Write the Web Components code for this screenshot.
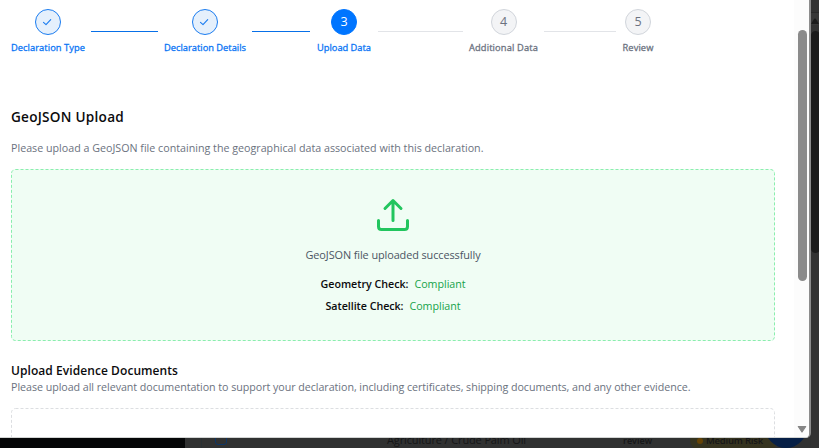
<!DOCTYPE html>
<html lang="en">
<head>
<meta charset="utf-8">
<title>Declaration</title>
<style>
html,body{margin:0;height:100%;overflow:hidden;background:#303131}
body{font-family:"Open Sans","Noto Sans",sans-serif;color:#0b0b0d}
</style>
</head>
<body>
<declaration-page></declaration-page>
<script>
const define=(name,html,setup)=>customElements.define(name,class extends HTMLElement{
  connectedCallback(){
    if(this.shadowRoot)return;
    const t=document.createElement('template');
    t.innerHTML=html;
    this.attachShadow({mode:'open'}).append(t.content.cloneNode(true));
    if(setup)setup(this,this.shadowRoot);
  }
});

/* One line of text whose tracking is tuned so that it spans the given width. */
define('fit-text',`<style>:host{display:block;white-space:nowrap}span{display:inline-block;white-space:nowrap}</style><span></span>`,(el,root)=>{
  const s=root.querySelector('span');
  s.textContent=el.getAttribute('text');
  const w=+el.getAttribute('w');
  el.style.width=w+'px';
  s.style.letterSpacing=(w-s.getBoundingClientRect().width)/s.textContent.length+'px';
});

define('step-item',`<style>
:host{display:flex;flex-direction:column;align-items:center;color:#6b7280}
.c{box-sizing:border-box;width:26px;height:26px;border-radius:50%;border:1px solid #d1d5db;background:#f3f4f6;display:flex;align-items:center;justify-content:center;font-size:12.5px;line-height:24px}
:host([state=done]),:host([state=active]){color:#0a75f5}
:host([state=done]) .c{border-color:#1a7cf0;background:#e5f0fc}
:host([state=active]) .c{border-color:#0075ff;background:#0075ff;color:#fff}
fit-text{margin-top:6px;font-size:9.3px;line-height:13px;-webkit-text-stroke:.3px currentColor}
svg{display:block}
</style><div class="c"></div><fit-text></fit-text>`,(el,root)=>{
  const c=root.querySelector('.c');
  if(el.getAttribute('state')==='done')c.innerHTML='<svg width="12" height="12" viewBox="0 0 12 12" fill="none" stroke="#1a7cf0" stroke-width="1.1" stroke-linecap="round" stroke-linejoin="round"><path d="M1.5 6.4 4 8.7 8.7 3.6"/></svg>';
  else c.textContent=el.getAttribute('n');
  const old=root.querySelector('fit-text'),f=document.createElement('fit-text');
  f.setAttribute('text',el.getAttribute('label'));f.setAttribute('w',el.getAttribute('w'));
  old.replaceWith(f);
});

define('step-line',`<style>:host{display:block;height:1px;margin:22px 6px 0;background:#e2e4e8}:host([on]){background:#0870e8}</style>`);

define('upload-zone',`<style>
:host{display:flex;box-sizing:border-box;flex-direction:column;align-items:center;position:relative}
svg.b{position:absolute;inset:0;width:100%;height:100%}
</style><svg class="b"><rect x=".5" y=".5" rx="4" fill="none" stroke-dasharray="3 2"/></svg><slot></slot>`,(el,root)=>{
  const r=root.querySelector('rect');
  r.style.width='calc(100% - 1px)';r.style.height='calc(100% - 1px)';
  r.setAttribute('stroke',el.getAttribute('line'));
});

define('scroll-bar',`<style>
:host{display:flex;flex-direction:column;align-items:center;width:15px;box-sizing:border-box;background:#fcfcfc;padding:30px 0 3px 1px}
i{width:9px;height:251px;border-radius:5px;background:#8b8b8b}
svg{display:block;margin-top:auto}
</style><i></i><svg width="10" height="9"><path d="M1.3 1.5H8.7L5 7Z" fill="#858585" stroke="#858585" stroke-width="1.2" stroke-linejoin="round"/></svg>`);

define('page-backdrop',`<style>
:host{position:absolute;left:0;right:0;bottom:0;height:448px;overflow:hidden;background:#303131}
.nav{position:absolute;left:0;bottom:0;width:185px;height:12px;background:#050607}
.rule{position:absolute;left:201px;bottom:0;width:1px;height:12px;background:#293033}
.box{position:absolute;box-sizing:border-box;left:215px;top:433px;width:12px;height:12px;border:1px solid #0c3566;border-radius:3px}
.t{position:absolute;color:#151617}
.p{position:absolute;left:690px;top:430px;width:88px;height:20px;border-radius:10px;background:#35331f}
.dot{position:absolute;left:697px;top:438px;width:6px;height:6px;border-radius:50%;background:#654305}
.fab{position:absolute;left:765px;top:406px;width:42px;height:42px;border-radius:50%;background:#061f46}
.bar{position:absolute;left:811px;top:0;width:8px;height:448px;background:#323232}
.up{position:absolute;left:0;top:12px;width:8px;height:13px;background:#373737;border-top:1px solid #292929;box-sizing:border-box}
.thumb{position:absolute;left:0;top:31px;width:9px;height:222px;border-radius:5px;background:#1b1b1b}
svg{position:absolute;left:0;top:18px}
</style>
<div class="nav"></div><div class="rule"></div><div class="box"></div>
<div class="t" style="left:250px;top:444px;font-size:11px;line-height:15px"><fit-text text="Pending" w="35"></fit-text></div>
<div class="t" style="left:387px;top:432px;font-size:11px;line-height:15px"><fit-text text="Agriculture / Crude Palm Oil" w="139"></fit-text></div>
<div class="t" style="left:623px;top:434px;font-size:9px;line-height:13px;font-weight:600"><fit-text text="review" w="29"></fit-text></div>
<div class="p"></div><div class="dot"></div>
<div class="t" style="left:706px;top:434px;font-size:9.5px;line-height:13px;font-weight:600"><fit-text text="Medium Risk" w="57"></fit-text></div>
<div class="fab"></div>
<div class="bar"><div class="up"></div><svg width="8" height="7"><path d="M0 6 3.2.8Q4 .2 4.8 .8L8 6Z" fill="#1b1b1b"/></svg><div class="thumb"></div></div>`);

define('declaration-page',`<style>
:host{display:block;position:relative;width:819px;height:448px;overflow:hidden}
.dialog{position:relative;box-sizing:border-box;width:811px;height:438px;background:#fff;border-right:2px solid #8c8c8c;border-bottom:1px solid #d2d4d3;border-radius:0 0 5px 0;display:flex;justify-content:space-between;overflow:hidden}
main{box-sizing:border-box;width:775px;padding:9px 0 0 11px;overflow:hidden}
.steps{display:grid;width:643px;grid-template-columns:74px 79px 82px 70px 56px 97px 69px 84px 32px;height:50px}
h2,p,h3{margin:0;font-weight:400}
h2{font-size:13.6px;line-height:18px;font-weight:600;margin-top:49px}
p{font-size:10.7px;line-height:16px;color:#6b7280}
.first{margin:14px 0 13px}
.ok{height:172px;background:#f0fdf4;border-radius:4px}
.ok>svg{margin-top:26px;display:block}
.msg{color:#4b5563;font-size:10.9px;line-height:16px;margin-top:12px}
.row{display:flex;gap:6px;font-size:10.7px;line-height:16px;color:#0b0b0d;margin-top:13px;font-weight:600}
.row+.row{margin-top:6px}
.row fit-text+fit-text{color:#16a34a;font-weight:400}
h3{font-size:12px;line-height:18px;font-weight:600;margin-top:21px}
h3+p{margin-top:-1px}
.next{height:100px;margin-top:13px}
</style>
<page-backdrop></page-backdrop>
<div class="dialog"><main>
<div class="steps">
<step-item state="done" label="Declaration Type" w="74"></step-item><step-line on></step-line>
<step-item state="done" label="Declaration Details" w="82"></step-item><step-line on></step-line>
<step-item state="active" n="3" label="Upload Data" w="54"></step-item><step-line></step-line>
<step-item n="4" label="Additional Data" w="69"></step-item><step-line></step-line>
<step-item n="5" label="Review" w="31"></step-item>
</div>
<h2><fit-text text="GeoJSON Upload" w="113"></fit-text></h2>
<p class="first"><fit-text text="Please upload a GeoJSON file containing the geographical data associated with this declaration." w="472.5"></fit-text></p>
<upload-zone class="ok" line="#8aeeae">
<svg width="40" height="40" viewBox="0 0 40 40" fill="none" stroke="#22c55e" stroke-width="3" stroke-linecap="round" stroke-linejoin="round"><path d="M5.5 25.5V31.5Q5.5 34.5 8.5 34.5H31.500Q34.500 34.500 34.500 31.500V25.500M12 13.500 20 5.500 28 13.500M20 5.500V25.500"/></svg>
<div class="msg"><fit-text text="GeoJSON file uploaded successfully" w="175"></fit-text></div>
<div class="row"><fit-text text="Geometry Check:" w="88"></fit-text><fit-text text="Compliant" w="51"></fit-text></div>
<div class="row"><fit-text text="Satellite Check:" w="78"></fit-text><fit-text text="Compliant" w="51"></fit-text></div>
</upload-zone>
<h3><fit-text text="Upload Evidence Documents" w="167"></fit-text></h3>
<p><fit-text text="Please upload all relevant documentation to support your declaration, including certificates, shipping documents, and any other evidence." w="679.5"></fit-text></p>
<upload-zone class="next" line="#dcdee1"></upload-zone>
</main><scroll-bar></scroll-bar></div>`);
</script>
</body>
</html>
